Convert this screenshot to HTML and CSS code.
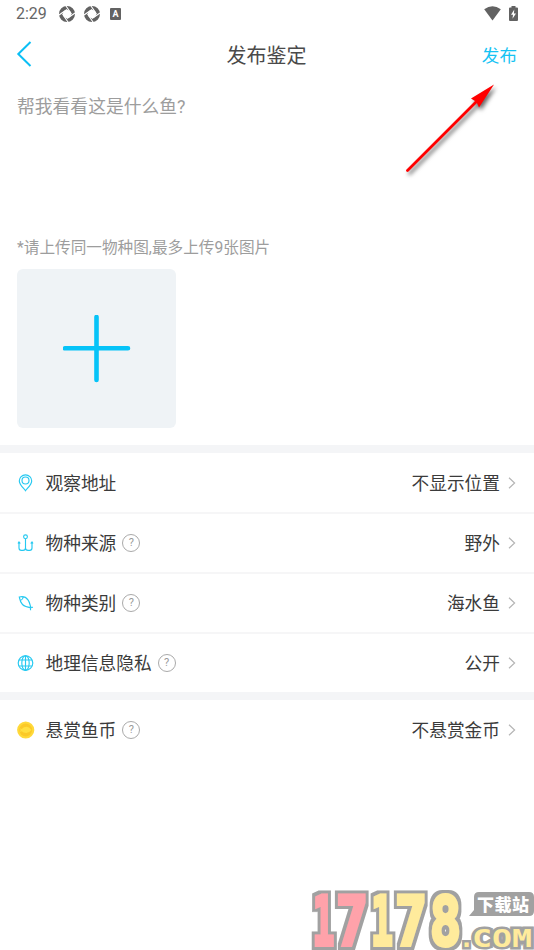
FILE: index.html
```html
<!DOCTYPE html>
<html lang="zh-CN">
<head>
<meta charset="utf-8">
<meta name="viewport" content="width=device-width, initial-scale=1">
<title>发布鉴定</title>
<link rel="stylesheet" href="styles.css">
</head>
<body>
<svg class="defs" width="0" height="0" aria-hidden="true">
  <symbol id="chevron" viewBox="0 0 8 12"><path d="M1 .8 6.600 6 1 11.200" fill="none" stroke="#b5b5b5" stroke-width="1.200"/></symbol>
  <symbol id="shutter" viewBox="0 0 16 16"><circle cx="8" cy="8" r="6" fill="none" stroke="#626262" stroke-width="4"/><path d="M8 3.500 12.500 8 8 12.500 3.500 8Z" fill="#fff"/><path d="M7 0 12.500 8M16 7 8 12.500M9 16 3.500 8M0 9 8 3.500" stroke="#fff" stroke-width="1.100"/></symbol>
</svg>
<main class="screen">
  <div class="status">
    <span class="time">2:29</span>
    <svg class="shutter" width="16" height="16"><use href="#shutter"/></svg>
    <svg class="shutter second" width="16" height="16"><use href="#shutter"/></svg>
    <span class="badge">A</span>
    <svg class="wifi" width="17" height="15" viewBox="0 0 17 15"><path d="M.2 3.300Q8.500-2.800 16.800 3.300L8.500 14.500Z" fill="#626262"/></svg>
    <svg class="battery" width="9" height="15" viewBox="0 0 9 15"><path d="M2.500 0h4v1.500H8q1 0 1 1V14q0 1-1 1H1q-1 0-1-1V2.500q0-1 1-1h1.500z" fill="#626262"/><path d="M5.300 3.500 2 8.700h2l-.5 4.100L7 7.400H4.900z" fill="#fff"/></svg>
  </div>
  <header class="header">
    <svg width="16" height="26" viewBox="0 0 16 26"><path d="M14.500 1 2.300 13 14.500 25" fill="none" stroke="#0bbff5" stroke-width="2"/></svg>
    <h1>发布鉴定</h1>
    <span class="publish">发布</span>
  </header>
  <section class="editor">
    <p class="prompt">帮我看看这是什么鱼?</p>
    <p class="hint">*请上传同一物种图,最多上传9张图片</p>
    <div class="upload"><svg width="68" height="68" viewBox="0 0 68 68"><path d="M33.500 2v63M2 33.300h63" stroke="#06c3f8" stroke-width="4.600" stroke-linecap="round"/></svg></div>
  </section>
  <section class="group">
    <div class="row">
      <svg class="icon" width="18" height="18" viewBox="0 0 18 18"><path d="M8.500 16.800C7 14.500 2.300 10.800 2.300 7a6.200 6.200 0 0 1 12.400 0c0 3.800-4.700 7.500-6.200 9.800z"/><circle cx="8.500" cy="6.500" r="3.500"/></svg>
      <span class="label">观察地址</span><span class="value">不显示位置</span><svg class="chevron"><use href="#chevron"/></svg>
    </div>
    <div class="row">
      <svg class="icon" width="18" height="18" viewBox="0 0 18 18"><circle cx="8.500" cy="2.800" r="1.900"/><path d="M8.500 4.800V15M2 8v6q0 2.400 2.300 2.400H6q2.500 0 2.500-2.400 0 2.400 2.500 2.400h1.700q2.300 0 2.300-2.400V8M1 9.500 2 7.900 3.300 9.500M13.700 9.500 15 7.900 16 9.500"/></svg>
      <span class="label">物种来源</span><span class="help">?</span><span class="value">野外</span><svg class="chevron"><use href="#chevron"/></svg>
    </div>
    <div class="row">
      <svg class="icon" width="18" height="18" viewBox="0 0 18 18"><path d="M2.300 3Q8 1.600 11 5.800C13 8.500 13 11 13.800 13.500Q8 13 5.500 10.500C3 8 2.800 5.500 2.300 3ZM3.500 6.500Q6 5.700 6.300 2.800M12 13.500l4-.3M13.200 13l.4 3.200"/></svg>
      <span class="label">物种类别</span><span class="help">?</span><span class="value">海水鱼</span><svg class="chevron"><use href="#chevron"/></svg>
    </div>
    <div class="row">
      <svg class="icon" width="18" height="18" viewBox="0 0 18 18"><circle cx="8.500" cy="9" r="7.300"/><ellipse cx="8.500" cy="9" rx="3.700" ry="7.300"/><path d="M8.500 1.700v14.600M2 6h13M2 12h13"/></svg>
      <span class="label">地理信息隐私</span><span class="help">?</span><span class="value">公开</span><svg class="chevron"><use href="#chevron"/></svg>
    </div>
  </section>
  <section class="group reward">
    <div class="row">
      <svg class="coin" width="18" height="18" viewBox="0 0 18 18"><circle cx="8.700" cy="9" r="8.600" fill="#ffd93a"/><circle cx="8.700" cy="9" r="6.400" fill="#fbc928"/><path d="M3 7.200 4.700 8Q6.700 5.800 9.700 5.800q3 .4 4.700 3.300Q12.200 12 9.200 12T4.700 10.300l-1.700.8.600-2z" fill="#ffdf40"/></svg>
      <span class="label">悬赏鱼币</span><span class="help">?</span><span class="value">不悬赏金币</span><svg class="chevron"><use href="#chevron"/></svg>
    </div>
  </section>
  <svg class="arrow" width="104" height="104" viewBox="400 78 104 104">
    <path d="M407.500 170.500 477 101" stroke="#f00" stroke-width="2.800" stroke-linecap="round"/>
    <path d="M494 84.500 479 107.500 476.500 102 471 98.500Z" fill="#f00"/>
  </svg>
  <svg class="watermark" width="226" height="64" viewBox="308 886 226 64">
    <defs>
      <filter id="outline" x="-10%" y="-10%" width="120%" height="120%">
        <feMorphology in="SourceAlpha" operator="dilate" radius="3" result="wide"/>
        <feFlood flood-color="#a1a1a1"/>
        <feComposite in2="wide" operator="in"/>
        <feMerge><feMergeNode/><feMergeNode in="SourceGraphic"/></feMerge>
      </filter>
    </defs>
    <g class="digits" filter="url(#outline)">
      <text class="pink" x="312.500" y="944.500" textLength="22" lengthAdjust="spacingAndGlyphs">1</text>
      <text class="pink" x="336" y="944.500" textLength="32" lengthAdjust="spacingAndGlyphs">7</text>
      <text class="yellow" x="371" y="944.500" textLength="22" lengthAdjust="spacingAndGlyphs">1</text>
      <text class="yellow" x="395" y="944.500" textLength="32" lengthAdjust="spacingAndGlyphs">7</text>
      <text class="yellow" x="430" y="944.500" textLength="31" lengthAdjust="spacingAndGlyphs">8</text>
    </g>
    <path d="M479 892h50q5 0 5 5v14q0 5-5 5h-60l5-6v-13q0-5 5-5z" fill="#a1a1a1"/>
    <text class="site" x="477" y="911" textLength="52">下载站</text>
    <text class="domain" y="946.500"><tspan x="459">.</tspan><tspan x="472" textLength="60" lengthAdjust="spacingAndGlyphs">COM</tspan></text>
  </svg>
</main>
</body>
</html>
```

FILE: styles.css
```css
* { box-sizing: border-box; }
body { margin: 0; background: #fff; font-family: Roboto, "Noto Sans CJK SC", sans-serif; color: #3b3b3b; }
h1, p { margin: 0; font-weight: 400; }
svg { display: block; flex: none; }
.defs { position: absolute; }
.screen { position: relative; width: 534px; height: 950px; overflow: hidden; }
.status { height: 28px; display: flex; align-items: center; padding: 0 16px 1px; color: #666; }
.time { width: 43px; font-size: 16px; }
.second { margin-left: 9px; }
.badge { margin-left: 10px; width: 11px; height: 12px; border-radius: 1px; background: #626262; color: #fff; font: 700 9px/12px Roboto, sans-serif; text-align: center; }
.wifi { margin-left: auto; margin-right: 8px; }
.header { height: 52px; display: flex; align-items: center; justify-content: space-between; padding: 0 17px 0 16px; }
.header > svg { margin-right: 19px; }
.header h1 { padding-top: 3px; font-size: 20px; line-height: 30px; color: #4a4a4a; }
.publish { padding-top: 3px; font-size: 17.6px; line-height: 28px; color: #16c3f3; }
.editor { height: 365px; padding: 13px 17px 0; color: #9d9d9d; }
.prompt { height: 142px; font-size: 17.8px; line-height: 28px; }
.hint { height: 34px; font-size: 15.65px; line-height: 25px; }
.upload { width: 159px; height: 159px; border-radius: 6px; background: #eff3f6; display: grid; place-items: center; }
.group { border-top: 8px solid #f4f5f7; }
.row { height: 60px; display: flex; align-items: center; padding: 0 18px 0 17px; border-bottom: 2px solid #f6f6f7; font-size: 17.7px; line-height: 28px; }
.row:first-child { height: 61px; padding-top: 1px; }
.row:last-child { border-bottom-color: transparent; }
.reward { margin-top: -2px; }
.icon { fill: none; stroke: #25c9f1; stroke-width: 1.15; }
.label { margin-left: 10.5px; padding-top: 2px; }
.help { width: 18px; height: 18px; margin-left: 6px; border: 1px solid #aaa; border-radius: 50%; font-size: 11px; line-height: 16.5px; text-align: center; color: #999; }
.value { margin-left: auto; padding-top: 2px; }
.chevron { width: 8px; height: 12px; margin-left: 8px; }
.arrow { position: absolute; left: 400px; top: 78px; filter: drop-shadow(2px 3px 2px #0009); }
.watermark { position: absolute; right: 0; bottom: 0; }
.digits { font: 700 67px "DejaVu Sans Mono", monospace; stroke-width: 4px; }
.pink { fill: #ffa2aa; stroke: #ffa2aa; }
.yellow { fill: #ffeb9c; stroke: #ffeb9c; }
.site { font: 900 17px "Noto Sans CJK SC", sans-serif; fill: #fff; }
.domain { font: 700 25px "DejaVu Sans Mono", monospace; fill: #ffeb9c; stroke: #a1a1a1; stroke-width: 5px; paint-order: stroke; }
```
